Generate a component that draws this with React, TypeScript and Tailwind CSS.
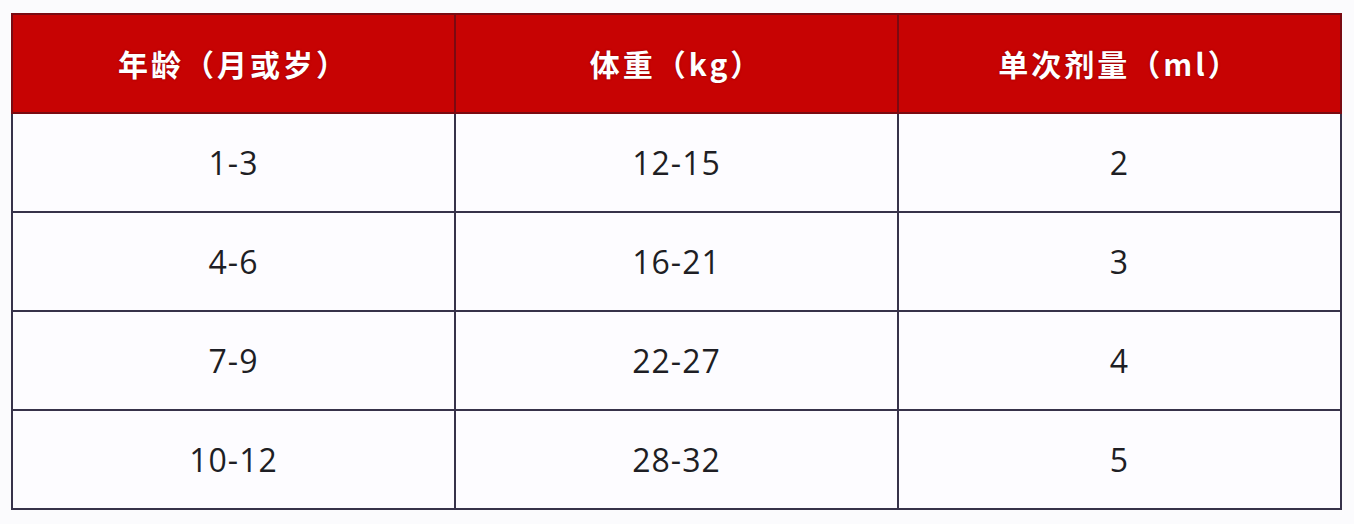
const rows = [
  ["1-3", "12-15", "2"],
  ["4-6", "16-21", "3"],
  ["7-9", "22-27", "4"],
  ["10-12", "28-32", "5"],
];

const headers = ["年龄（月或岁）", "体重（kg）", "单次剂量（ml）"];

export default function App() {
  return (
    <div className="w-[1354px] h-[524px] bg-[#fbfbfd] pt-[13px] pl-[11px]">
      <table className="w-[1331px] border-collapse table-fixed">
        <thead>
          <tr className="h-[99px] bg-[#c70303]">
            {headers.map((h) => (
              <th
                key={h}
                className="border-2 border-[#7a0a12] text-white font-bold text-[30px] tracking-[3px] [font-family:'Noto_Sans_CJK_SC',sans-serif] [text-shadow:0_0_2px_rgba(90,0,20,0.6)]"
              >
                {h}
              </th>
            ))}
          </tr>
        </thead>
        <tbody>
          {rows.map((r, i) => (
            <tr key={i} className="h-[99px] bg-[#fdfcff]">
              {r.map((c, j) => (
                <td
                  key={j}
                  className="border-2 border-[#37324a] text-center text-[32px] tracking-[1px] text-[#1e1e24] [font-family:'Open_Sans',sans-serif]"
                >
                  {c}
                </td>
              ))}
            </tr>
          ))}
        </tbody>
      </table>
    </div>
  );
}
